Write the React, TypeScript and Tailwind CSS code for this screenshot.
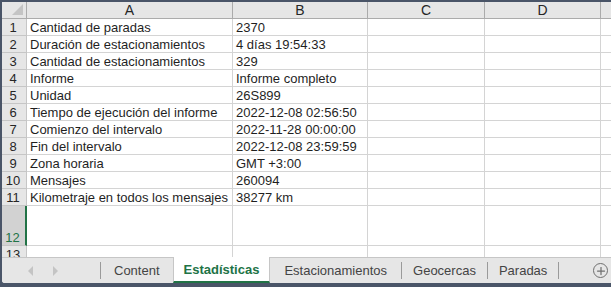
import { Plus } from "lucide-react";

const rows: [string, string][] = [
  ["Cantidad de paradas", "2370"],
  ["Duración de estacionamientos", "4 días 19:54:33"],
  ["Cantidad de estacionamientos", "329"],
  ["Informe", "Informe completo"],
  ["Unidad", "26S899"],
  ["Tiempo de ejecución del informe", "2022-12-08 02:56:50"],
  ["Comienzo del intervalo", "2022-11-28 00:00:00"],
  ["Fin del intervalo", "2022-12-08 23:59:59"],
  ["Zona horaria", "GMT +3:00"],
  ["Mensajes", "260094"],
  ["Kilometraje en todos los mensajes", "38277 km"],
];

function Row({ n, a, b, tall, selected }: { n: number; a: string; b: string; tall?: boolean; selected?: boolean }) {
  return (
    <div className={`flex shrink-0 ${tall ? "h-[40px]" : "h-[17px]"}`}>
      <div
        className={`w-[25px] shrink-0 flex justify-center pr-[2px] border-b border-[#c6c6c6] ${
          tall ? "items-end pb-[1px]" : "items-center"
        } ${selected ? "bg-[#d2d2d2] text-[#217346] border-r-2 border-r-[#217346]" : "bg-[#e6e6e6] text-[#262626] border-r border-r-[#c6c6c6]"}`}
      >
        {n}
      </div>
      <div className="w-[206px] shrink-0 border-r border-b border-[#d4d4d4] pl-[3px] flex items-center whitespace-nowrap overflow-hidden">{a}</div>
      <div className="w-[135px] shrink-0 border-r border-b border-[#d4d4d4] pl-[3px] flex items-center whitespace-nowrap overflow-hidden">{b}</div>
      <div className="w-[117px] shrink-0 border-r border-b border-[#d4d4d4]" />
      <div className="w-[116px] shrink-0 border-r border-b border-[#d4d4d4]" />
      <div className="flex-1 border-b border-[#d4d4d4]" />
    </div>
  );
}

// sheet tabs with the padding each one has in the tab strip
const tabs = [
  { name: "Content", pad: "px-[13px]" },
  { name: "Estadísticas", pad: "px-[10px]", active: true },
  { name: "Estacionamientos", pad: "px-[14px]" },
  { name: "Geocercas", pad: "px-[11px]" },
  { name: "Paradas", pad: "px-[11px]" },
];

export default function App() {
  return (
    <div className="w-[611px] h-[287px] bg-[#4a5568] pt-[2px] pl-[2px] pb-[4px] overflow-hidden" style={{ fontFamily: '"Liberation Sans", Arial, sans-serif' }}>
      <div className="h-full bg-white flex flex-col rounded-bl-[3px] overflow-hidden text-[13px] text-[#1f1f1f] leading-none">
        {/* column headers */}
        <div className="flex h-[17px] shrink-0 bg-[#e6e6e6] text-[14px] text-[#262626]">
          <div className="w-[25px] shrink-0 border-r border-b border-[#ababab] relative">
            <div className="absolute right-[3px] bottom-[3px] w-0 h-0 border-l-[11px] border-l-transparent border-b-[11px] border-b-[#c4c4c4]" />
          </div>
          <div className="w-[206px] shrink-0 border-r border-b border-[#ababab] flex items-center justify-center">A</div>
          <div className="w-[135px] shrink-0 border-r border-b border-[#ababab] flex items-center justify-center">B</div>
          <div className="w-[117px] shrink-0 border-r border-b border-[#ababab] flex items-center justify-center">C</div>
          <div className="w-[116px] shrink-0 border-r border-b border-[#ababab] flex items-center justify-center">D</div>
          <div className="flex-1 border-b border-[#ababab]" />
        </div>

        {rows.map(([a, b], i) => (
          <Row key={i} n={i + 1} a={a} b={b} />
        ))}
        <Row n={12} a="" b="" tall selected />
        <div className="flex-1 min-h-0 overflow-hidden">
          <Row n={13} a="" b="" />
        </div>

        {/* sheet tabs */}
        <div className="h-[26px] shrink-0 flex bg-[#e6e6e6] border-t border-[#c6c6c6] text-[13px] text-[#444]">
          <div className="w-[98px] shrink-0 flex items-center gap-[20px] pl-[26px]">
            <span className="w-0 h-0 border-y-[5px] border-y-transparent border-r-[5px] border-r-[#c4c4c4]" />
            <span className="w-0 h-0 border-y-[5px] border-y-transparent border-l-[5px] border-l-[#c4c4c4]" />
          </div>
          <div className="flex items-stretch">
            <div className="w-[1px] my-[4px] bg-[#9a9a9a]" />
            {tabs.map((t) =>
              t.active ? (
                <div
                  key={t.name}
                  className={`-mt-px ${t.pad} flex items-center bg-white border-x border-[#c6c6c6] border-b-2 border-b-[#217346] font-bold text-[#217346]`}
                >
                  {t.name}
                </div>
              ) : (
                <div key={t.name} className="flex items-stretch">
                  <div className={`${t.pad} flex items-center`}>{t.name}</div>
                  {t.name !== "Content" && <div className="w-[1px] my-[4px] bg-[#9a9a9a]" />}
                </div>
              ),
            )}
          </div>
          <div className="flex-1 flex items-center justify-end pr-[3px]">
            <div className="w-[15px] h-[15px] rounded-full border border-[#6f6f6f] flex items-center justify-center">
              <Plus size={12} strokeWidth={2.5} color="#6f6f6f" />
            </div>
          </div>
        </div>
      </div>
    </div>
  );
}
